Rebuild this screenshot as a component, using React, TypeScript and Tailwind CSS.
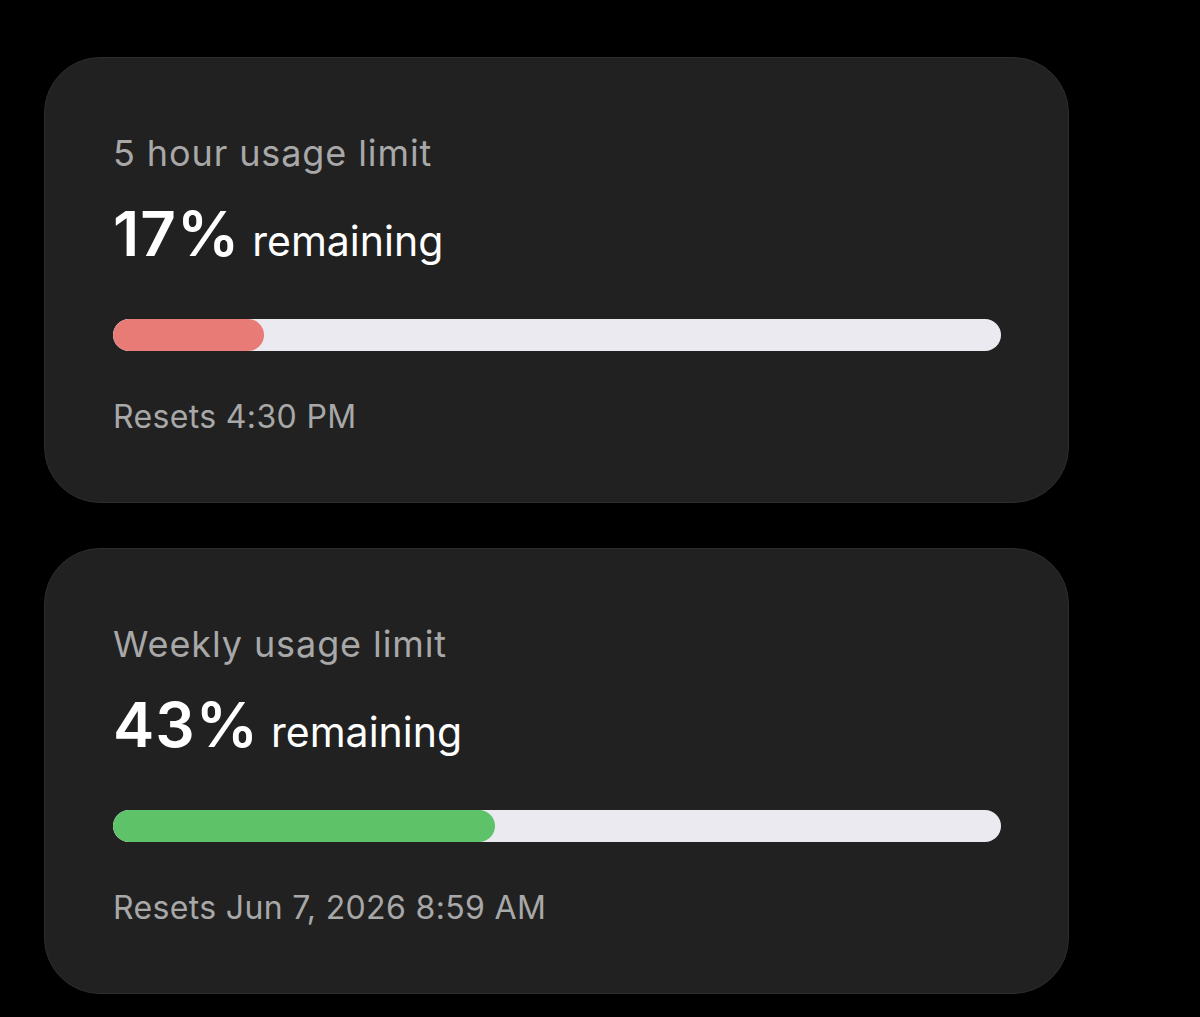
import React from "react";

function Card({ title, pct, color, reset }: { title: string; pct: number; color: string; reset: string }) {
  return (
    <div className="w-[1025px] h-[446px] rounded-[56px] bg-[#212121] border border-[#2d2d2d] pl-[68px] pr-[67px] pt-[77px] flex flex-col">
      <div className="text-[36px] leading-[36px] text-[#a8a8a8] tracking-[0.9px]">{title}</div>
      <div className="mt-[32px] h-[62px] flex items-baseline leading-[62px] text-white">
        <span className="text-[62px] font-semibold tracking-[1px]">{pct}%</span>
        <span className="text-[41px] ml-[12px]">remaining</span>
      </div>
      <div className="mt-[54px] h-[32px] w-full rounded-full bg-[#ebeaf0] overflow-hidden">
        <div className="h-full rounded-full" style={{ width: `${pct}%`, backgroundColor: color }} />
      </div>
      <div className="mt-[50px] text-[32px] leading-[32px] text-[#a8a8a8] tracking-[0.35px]">{reset}</div>
    </div>
  );
}

export default function App() {
  return (
    <div className="w-[1200px] h-[1017px] bg-black pl-[44px] pt-[57px] flex flex-col gap-[45px]" style={{ fontFamily: "Inter, 'Liberation Sans', sans-serif" }}>
      <Card title="5 hour usage limit" pct={17} color="#e87b76" reset="Resets 4:30 PM" />
      <Card title="Weekly usage limit" pct={43} color="#5ec269" reset="Resets Jun 7, 2026 8:59 AM" />
    </div>
  );
}
